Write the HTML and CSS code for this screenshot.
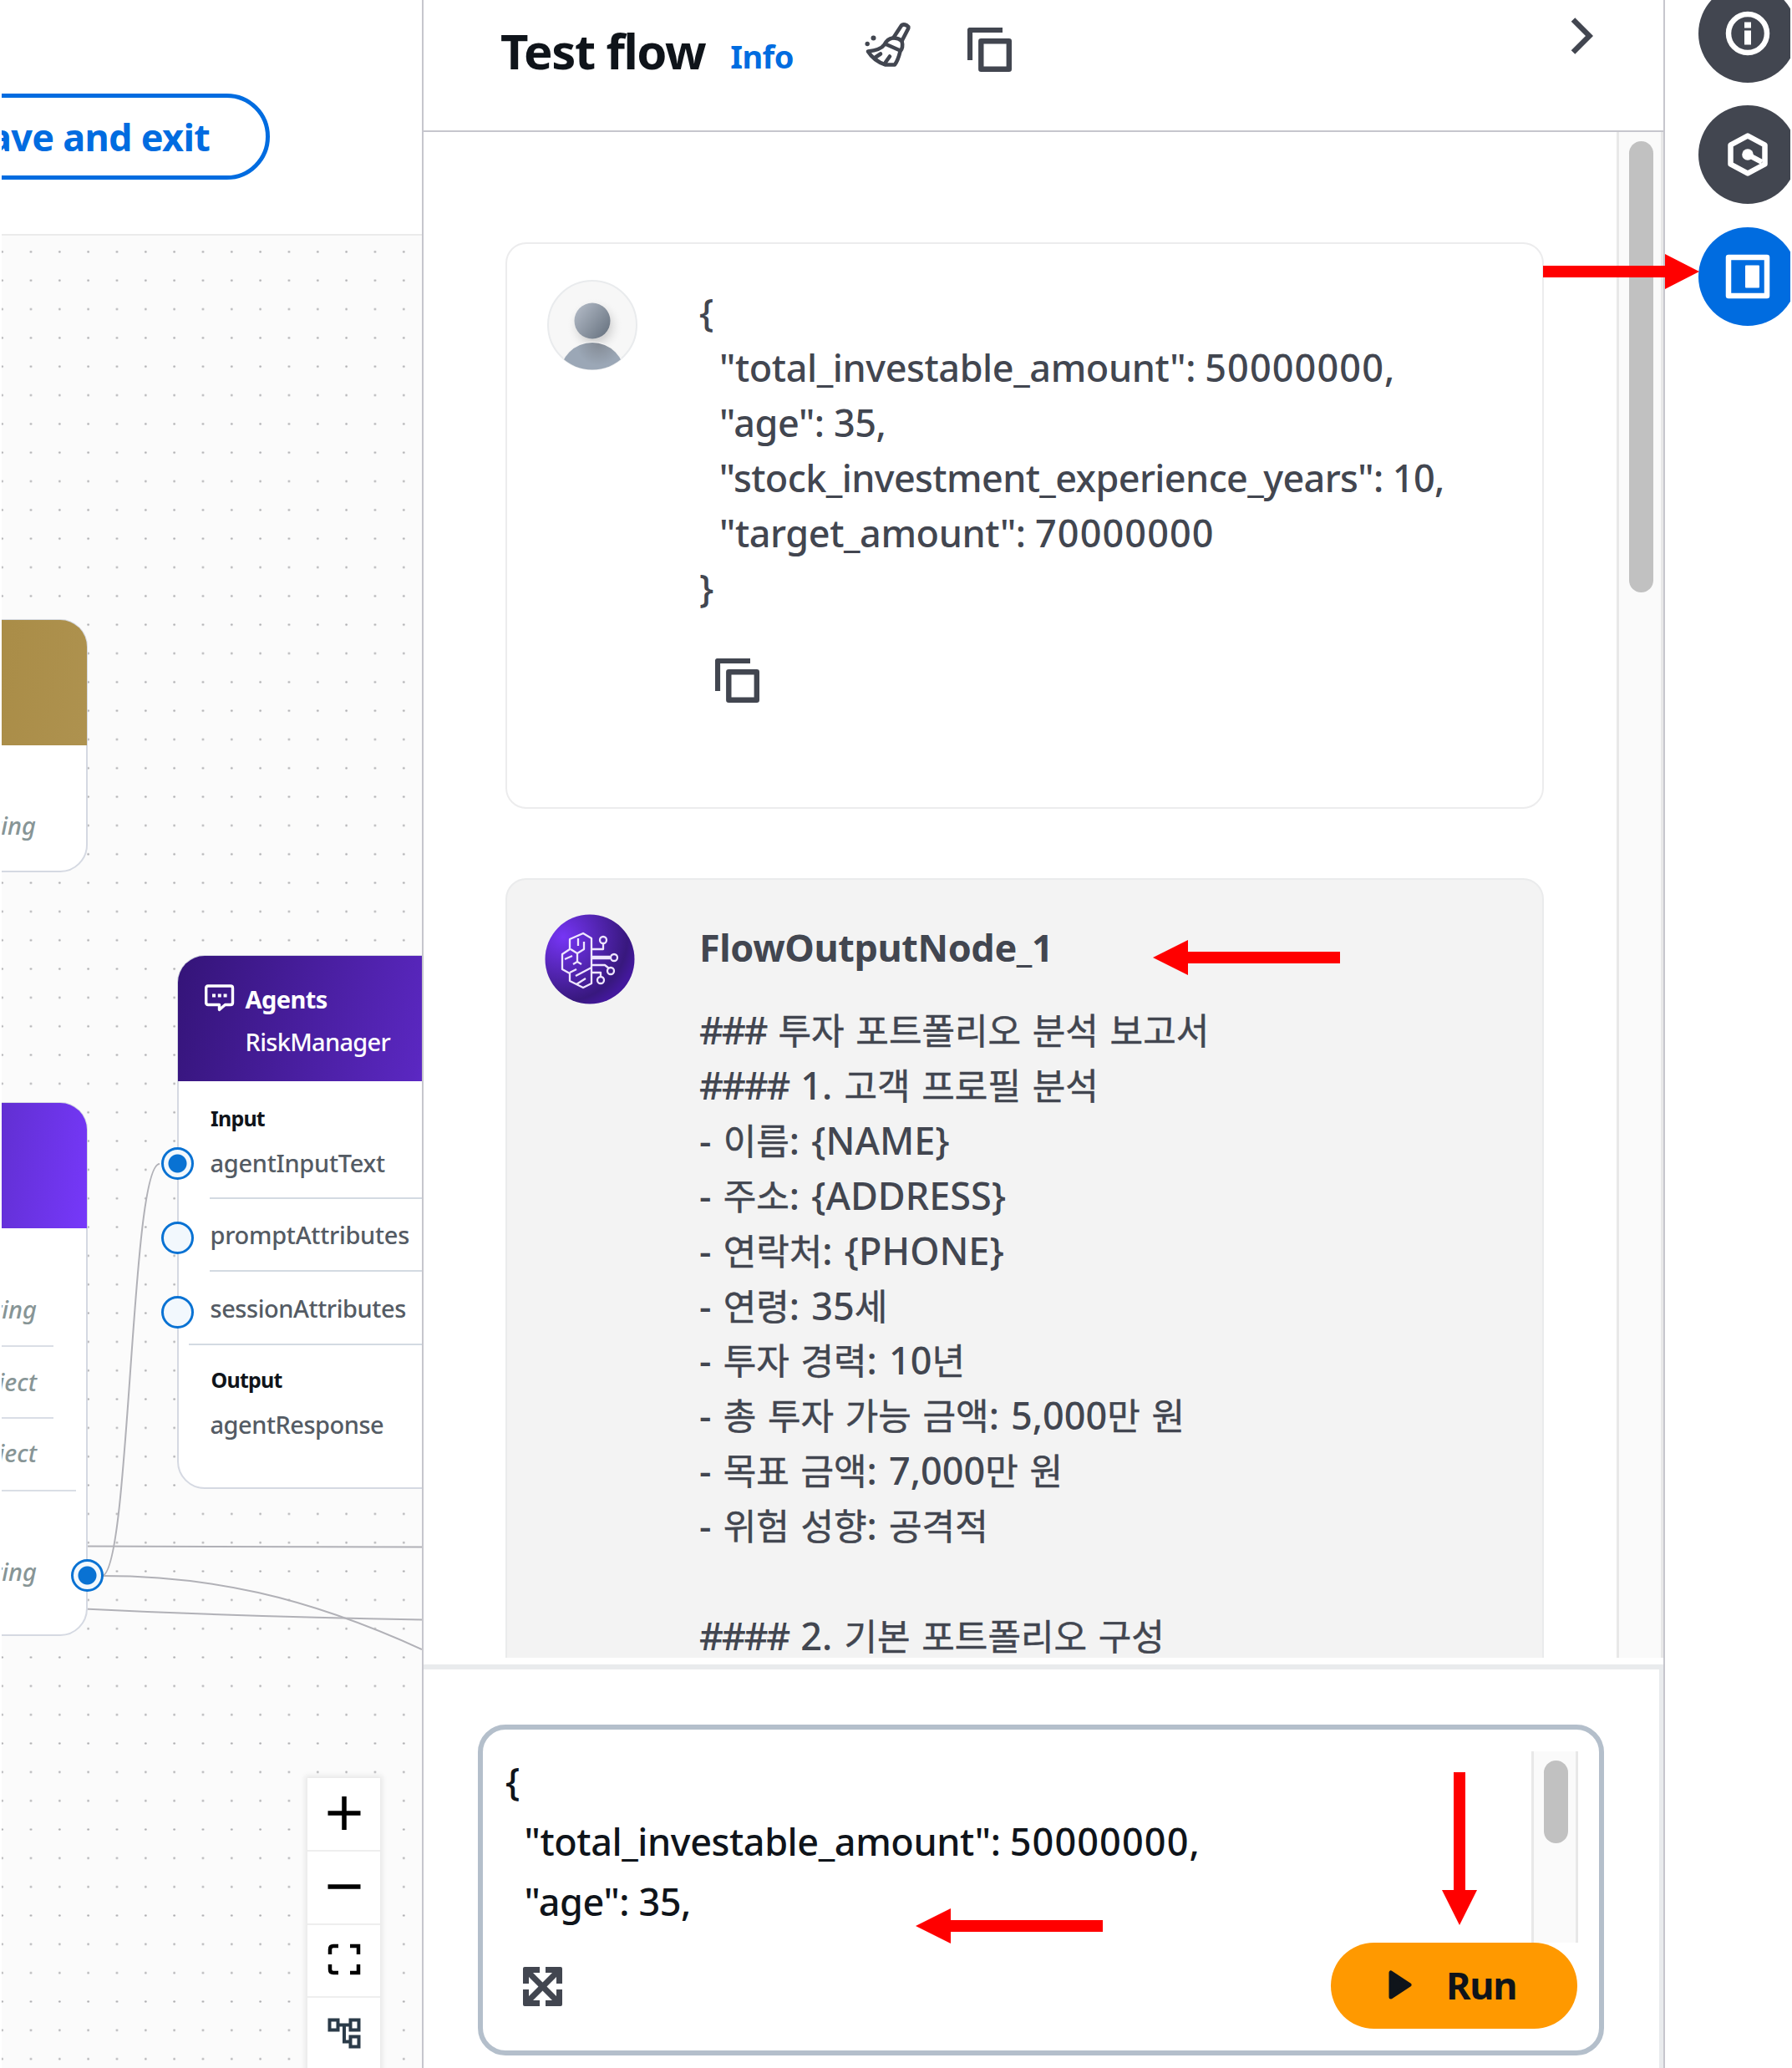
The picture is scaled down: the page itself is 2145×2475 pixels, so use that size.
FILE: index.html
```html
<!DOCTYPE html>
<html lang="ko">
<head>
<meta charset="utf-8">
<title>Test flow</title>
<link rel="stylesheet" href="styles.css">
</head>
<body>
<svg class="defs" width="0" height="0" aria-hidden="true">
  <defs>
    <symbol id="copy" viewBox="0 0 53 53">
      <path d="M3 39V3H42" fill="none" stroke="currentColor" stroke-width="6.200" stroke-linejoin="round"/>
      <rect x="16.300" y="16.300" width="33.500" height="33.500" fill="none" stroke="currentColor" stroke-width="6.400" stroke-linejoin="round"/>
    </symbol>
  </defs>
</svg>
<div class="app">
  <section class="workspace">
    <header class="topbar">
      <button class="save-exit">Save and exit</button>
    </header>
    <div class="canvas">
      <svg class="edges" width="505" height="2192" viewBox="0 282 505 2192">
        <defs>
          <pattern id="dots" x="-14.500" y="284.200" width="34.330" height="34.330" patternUnits="userSpaceOnUse">
            <circle cx="17.160" cy="17.160" r="1.250" fill="#a9a9ac"/>
          </pattern>
        </defs>
        <rect x="0" y="282" width="505" height="2192" fill="url(#dots)"/>
        <g fill="none" stroke="#b1b1b7" stroke-width="2">
          <path d="M122 1886C156 1886 156 1393 191 1393"/>
          <path d="M122 1886C250 1886 365 1910 505 1974"/>
          <path d="M90 1850.500L505 1851.500"/>
          <path d="M90 1925Q290 1935 505 1938.500"/>
        </g>
      </svg>

      <article class="node node-gold">
        <div class="node-head"></div>
        <div class="node-row type">String</div>
      </article>

      <article class="node node-purple">
        <div class="node-head"></div>
        <div class="node-row type">String</div>
        <div class="node-row type">Object</div>
        <div class="node-row type">Object</div>
        <div class="node-row type out">String</div>
        <i class="handle filled"></i>
      </article>

      <article class="node node-agent">
        <div class="node-head">
          <svg class="chat" width="36" height="36" viewBox="0 0 36 36" fill="none" stroke="#fff" stroke-width="3.400" stroke-linejoin="round">
            <path d="M4 2H31Q33.500 2 33.500 4.500V22Q33.500 24.500 31 24.500H24.500L17.500 30.500V24.500H4Q1.700 24.500 1.700 22V4.500Q1.700 2 4 2Z"/>
            <path d="M9 13.500H13M15.800 13.500H19.800M22.600 13.500H26.600" stroke-width="4"/>
          </svg>
          <div><b>Agents</b><span>RiskManager</span></div>
        </div>
        <h4>Input</h4>
        <div class="port p1">agentInputText</div>
        <div class="port p2">promptAttributes</div>
        <div class="port p3">sessionAttributes</div>
        <h4 class="sep">Output</h4>
        <div class="port p4">agentResponse</div>
        <i class="handle filled h1"></i><i class="handle h2"></i><i class="handle h3"></i>
      </article>

      <div class="controls">
        <div><svg width="40" height="40" viewBox="0 0 40 40"><path d="M20 0V40M.5 20H39.500" stroke="#000" stroke-width="5.500"/></svg></div>
        <div><svg width="40" height="40" viewBox="0 0 40 40"><path d="M.5 20H39.500" stroke="#000" stroke-width="5.500"/></svg></div>
        <div><svg width="40" height="40" viewBox="0 0 40 40" fill="none" stroke="#000" stroke-width="4.500"><path d="M3 14V8Q3 4 7 4H13M27 4H37V14M37 26V36H27M13 36H7Q3 36 3 32V26"/></svg></div>
        <div><svg width="40" height="40" viewBox="0 0 40 40" fill="none" stroke="#2b3b49" stroke-width="4"><rect x="2.500" y="4.500" width="10" height="12"/><rect x="27.500" y="4.500" width="10" height="12"/><rect x="27.500" y="24.500" width="10" height="12"/><path d="M13 10.500H27M20 10.500V30.500H27"/></svg></div>
      </div>
    </div>
  </section>

  <section class="panel">
    <header class="panel-head">
      <h2>Test flow</h2>
      <a class="info">Info</a>
      <svg class="broom" width="56" height="54" viewBox="0 0 56 54" fill="none" stroke="#424650" stroke-width="4.600" stroke-linejoin="round" stroke-linecap="round">
        <path d="M34.500 18L44 3.500Q45.500 2 48 2.500L50.500 3.500Q53 5 52 7.500L44.500 22"/>
        <path d="M33.500 18.500Q27 19.500 24 26Q19 33 4 34.500Q11 46 25 50.500H36Q40 45 42.500 34.500Q46.500 30 44.500 22Q40 18 33.500 18.500Z"/>
        <path d="M24.500 25.500L42.500 33.500M13 41.500L19 37.500M25 47.500L30 40.500"/>
        <circle cx="10.500" cy="18.500" r="3" fill="#424650" stroke="none"/>
        <circle cx="3.200" cy="25.500" r="2.700" fill="#424650" stroke="none"/>
      </svg>
      <svg class="icon head-copy" width="53" height="53"><use href="#copy"/></svg>
      <svg class="chevron" width="27" height="44" viewBox="0 0 27 44"><path d="M3 2.500L22.500 22L3 41.500" fill="none" stroke="#424650" stroke-width="6.500"/></svg>
    </header>

    <div class="scroll">
      <div class="messages">
        <article class="card user">
          <svg class="avatar" width="108" height="108" viewBox="0 0 108 108">
            <defs>
              <linearGradient id="head" x1="0" y1="0.200" x2="0.900" y2="0.900"><stop offset="0" stop-color="#b0b8c4"/><stop offset="1" stop-color="#6b7683"/></linearGradient>
              <radialGradient id="body" cx="0.600" cy="0" r="0.700"><stop offset="0" stop-color="#848b95"/><stop offset="0.500" stop-color="#9ba7b6"/></radialGradient>
              <radialGradient id="shade"><stop offset="0.500" stop-color="#d6d6d6"/><stop offset="1" stop-color="#f7f7f7" stop-opacity="0"/></radialGradient>
              <clipPath id="round"><circle cx="54" cy="54" r="53.500"/></clipPath>
            </defs>
            <circle cx="54" cy="54" r="53" fill="#f7f7f7" stroke="#e9ebed" stroke-width="2"/>
            <circle cx="57" cy="55" r="34" fill="url(#shade)"/>
            <g clip-path="url(#round)">
              <circle cx="54" cy="115" r="41" fill="#f4f4f4"/>
              <circle cx="54" cy="114" r="39" fill="url(#body)"/>
            </g>
            <circle cx="54" cy="49" r="21.500" fill="url(#head)"/>
          </svg>
          <div class="body">
<pre>{
<span class="l1">  "total_investable_amount": <span class="num">50000000</span>,</span>
<span class="l1">  "age": 35,</span>
<span class="l2">  "stock_investment_experience_years": 10,</span>
<span class="l1">  "target_amount": <span class="num">70000000</span></span>
}</pre>
            <svg class="icon" width="53" height="53"><use href="#copy"/></svg>
          </div>
        </article>

        <article class="card bot">
          <svg class="avatar" width="108" height="108" viewBox="0 0 108 108">
            <defs><radialGradient id="violet" cx="0.200" cy="0.250" r="0.850"><stop offset="0" stop-color="#7635f5"/><stop offset="0.850" stop-color="#38187e"/><stop offset="1" stop-color="#43189c"/></radialGradient></defs>
            <circle cx="54" cy="54" r="53.500" fill="url(#violet)"/>
            <g fill="none" stroke="#efe6ff" stroke-width="2.300" stroke-linejoin="round">
              <path d="M56 29L46 23L30 30V42L21 48V66L30 71V80L46 88L56 83Z"/>
              <path d="M40 29V38M47 33V42L39 47L31 42M39 47V58M34 60L39 57L44 60M24 54L33 50M30 70L38 66M37 74L56 64M38 84L49 77"/>
              <path d="M56 42H70V35M56 51H78M56 53H78M56 61H72L77 65M56 70H67V75"/>
              <circle cx="70" cy="31" r="4"/><circle cx="83" cy="52" r="4"/><circle cx="79" cy="68" r="4"/><circle cx="67" cy="79" r="4"/>
            </g>
          </svg>
          <div class="body">
            <h3>FlowOutputNode_1</h3>
<pre><span class="hash">###</span> <span class="ko">투자 포트폴리오 분석 보고서</span>
<span class="hash">####</span> 1. <span class="ko">고객 프로필 분석</span>
- <span class="ko">이름</span>: {NAME}
- <span class="ko">주소</span>: {ADDRESS}
- <span class="ko">연락처</span>: {PHONE}
- <span class="ko">연령</span>: 35<span class="ko">세</span>
- <span class="ko">투자 경력</span>: 10<span class="ko">년</span>
- <span class="ko">총 투자 가능 금액</span>: 5,000<span class="ko">만 원</span>
- <span class="ko">목표 금액</span>: 7,000<span class="ko">만 원</span>
- <span class="ko">위험 성향</span>: <span class="ko">공격적</span>

<span class="hash">####</span> 2. <span class="ko">기본 포트폴리오 구성</span></pre>
          </div>
        </article>
      </div>
      <div class="track"><div class="thumb"></div></div>
    </div>

    <footer class="composer">
      <div class="prompt">
        <div class="prompt-text">
<pre>{
<span class="l1">  "total_investable_amount": <span class="num">50000000</span>,</span>
<span class="l1">  "age": 35,</span></pre>
          <div class="track small"><div class="thumb"></div></div>
        </div>
        <div class="actions">
          <svg width="47" height="47" viewBox="0 0 47 47" fill="#424650">
            <path d="M2 0H20V7H12L23.500 18.500L35 7H27V0H45Q47 0 47 2V20H40V12L28.500 23.500L40 35V27H47V45Q47 47 45 47H27V40H35L23.500 28.500L12 40H20V47H2Q0 47 0 45V27H7V35L18.500 23.500L7 12V20H0V2Q0 0 2 0Z"/>
          </svg>
          <button class="run"><svg width="28" height="36" viewBox="0 0 28 36"><path d="M3 3V32L25 17.500Z" fill="#0f141a" stroke="#0f141a" stroke-width="5" stroke-linejoin="round"/></svg>Run</button>
        </div>
      </div>
    </footer>
  </section>

  <nav class="rail">
    <div class="tool"><svg width="54" height="54" viewBox="0 0 54 54"><circle cx="27" cy="27" r="23" fill="none" stroke="#fff" stroke-width="6.500"/><path d="M23 13.500H31V20.500H23ZM23 23.500H31V40.500H23Z" fill="#fff"/></svg></div>
    <div class="tool"><svg width="54" height="54" viewBox="0 0 54 54" fill="none" stroke="#fff" stroke-width="6.500" stroke-linejoin="round"><path d="M27 4.500L47.500 15.500V38.500L27 49.500L6.500 38.500V15.500Z"/><circle cx="27" cy="27" r="6.800" fill="#fff" stroke="none"/><path d="M27 27L44 36"/></svg></div>
    <div class="tool active"><svg width="54" height="54" viewBox="0 0 54 54"><rect x="4" y="4" width="46" height="46" fill="none" stroke="#fff" stroke-width="6.500" stroke-linejoin="round"/><rect x="24" y="13.500" width="17" height="27" rx="1" fill="#fff"/></svg></div>
  </nav>

  <svg class="arrows" width="2145" height="2475" viewBox="0 0 2145 2475" fill="#f00">
    <path d="M1847 318H1993V304L2034 325L1993 346V332H1847Z"/>
    <path d="M1604 1139H1422V1125L1380 1146L1422 1167V1153H1604Z"/>
    <path d="M1320 2298H1138V2284L1096 2305L1138 2326V2312H1320Z"/>
    <path d="M1740 2121V2262H1726L1747 2304L1768 2262H1754V2121Z"/>
  </svg>
</div>
</body>
</html>
```
FILE: styles.css
```css
* { box-sizing: border-box; }

body {
  margin: 0;
  background: #fff;
  color: #424650;
  font: 500 45px/66px "Noto Sans", "Noto Sans CJK KR", sans-serif;
}

h2, h3, h4, pre { margin: 0; }
pre { font: inherit; white-space: pre; }
button { font: inherit; cursor: pointer; }
.defs { position: absolute; }

.app {
  position: relative;
  display: grid;
  grid-template-columns: 503px 1488px 1fr;
  width: 2145px;
  height: 2475px;
  padding: 0 2px 2px;
  overflow: hidden;
}

/* Workspace */
.workspace { display: flex; flex-direction: column; min-width: 0; overflow: hidden; height: 2475px; }

.topbar {
  flex: 0 0 282px;
  display: flex;
  align-items: flex-start;
  justify-content: flex-end;
  padding: 112px 182px 0 0;
  border-bottom: 2px solid #ebebeb;
}

.save-exit {
  flex: none;
  height: 103px;
  padding: 0 67px;
  border: 5px solid #006ce0;
  border-radius: 52px;
  background: #fff;
  color: #006ce0;
  font-weight: 680;
  letter-spacing: -0.7px;
  line-height: 89px;
  white-space: nowrap;
}

.canvas { position: relative; flex: 1; background: #fbfbfb; overflow: hidden; }
.edges { position: absolute; left: -2px; top: 0; }

.node {
  position: absolute;
  background: #fff;
  border: 2px solid #d5d9e2;
  border-radius: 33px;
  font-size: 29px;
  line-height: 40px;
}

.node-head { height: 150px; margin: -1px -1px 0; border-radius: 32px 32px 0 0; }

.node-gold { left: -298px; top: 459px; width: 401px; height: 303px; }
.node-gold .node-head { background: linear-gradient(100deg, #a08035, #ae924f); }
.node-gold .node-row { padding-top: 76px; }

.node-purple { left: -298px; top: 1037px; width: 401px; height: 639px; }
.node-purple .node-head { background: linear-gradient(100deg, #4d27aa 40%, #7638fa); }
.node-purple .node-row { height: 86.5px; margin-right: 39px; padding-top: 22.5px; border-bottom: 2px solid #dadee6; }
.node-purple .node-row:nth-child(2) { height: 141.5px; padding-top: 77px; }
.node-purple .node-row:nth-child(4) { margin-right: 12px; padding-right: 47px; padding-top: 21px; }
.node-purple .node-row.out { padding-top: 76px; border: 0; }

.type { padding-right: 60px; color: #879596; font-style: italic; text-align: right; }
.node-purple .type { padding-right: 20px; }

.node-agent { left: 209.5px; top: 861px; width: 420px; height: 639px; color: #545b64; }
.node-agent .node-head {
  display: flex;
  gap: 13px;
  padding: 34px 0 0 32px;
  background: linear-gradient(105deg, #341478, #5a27c0 70%, #7638fa);
  color: #fff;
}
.node-head b, .node-head span { display: block; letter-spacing: -0.7px; line-height: 51px; }
.node-head b { margin-top: -8px; letter-spacing: -0.6px; }

.node-agent h4 {
  padding: 23px 0 0 38.5px;
  color: #0f141a;
  font-size: 25px;
  font-weight: 700;
  letter-spacing: -0.8px;
  line-height: 42px;
}
.node-agent .sep { margin-left: 12px; padding: 20px 0 0 27px; border-top: 2px solid #d3dae2; }
.port { margin-left: 37px; padding-left: 1px; letter-spacing: -0.3px; }
.p1 { height: 76px; padding-top: 12.5px; border-bottom: 2px solid #d3dae2; }
.p2 { height: 87px; padding-top: 23px; border-bottom: 2px solid #d3dae2; }
.p3 { height: 86px; padding-top: 24px; letter-spacing: -0.45px; }
.p4 { padding-top: 13px; letter-spacing: -0.5px; }

.handle {
  position: absolute;
  width: 39px;
  height: 39px;
  border: 3.5px solid #0972d3;
  border-radius: 50%;
  background: #f2f8fd;
}
.handle.filled { background: radial-gradient(circle, #0972d3 10.5px, #f2f8fd 11.5px); }
.node-purple .handle { right: -20.5px; top: 545px; }
.node-agent .handle { left: -20.8px; }
.h1 { top: 228px; }
.h2 { top: 317px; }
.h3 { top: 406px; }

.controls {
  position: absolute;
  left: 366px;
  top: 1846px;
  width: 87px;
  background: #fff;
  box-shadow: 0 0 6px 3px rgba(0, 0, 0, 0.08);
}
.controls div { display: grid; place-items: center; height: 87.800px; border-bottom: 2px solid #eee; }
.controls svg { display: block; margin-bottom: 2px; }

/* Test panel */
.panel {
  display: flex;
  flex-direction: column;
  height: 2475px;
  border: 2px solid #c6c6cd;
  border-width: 0 2px;
}

.panel-head {
  flex: 0 0 158px;
  display: flex;
  align-items: flex-start;
  padding-left: 92px;
  border-bottom: 2px solid #c6c6cd;
}
.panel-head h2 { margin-top: 20px; color: #0f141a; font-size: 58px; font-weight: 740; letter-spacing: -1.4px; line-height: 81px; }
.info { margin: 34px 0 0 30px; color: #006ce0; font-size: 38px; font-weight: 670; letter-spacing: -0.6px; }
.broom { margin: 27px 0 0 85px; }
.head-copy { margin: 33px 0 0 67px; }
.chevron { margin: 21px 84px 0 auto; }

.scroll { flex: 0 0 1826px; display: flex; overflow: hidden; }
.messages { flex: 1; display: flex; flex-direction: column; gap: 83px; padding: 132px 87px 0 98px; }

.card { display: flex; border: 2px solid #ececed; border-radius: 25px; }
.card.user { flex: 0 0 678px; }
.card.bot { flex: 0 0 1200px; background: #f3f3f3; border-color: #eaebec; }
.avatar { flex: none; display: block; margin: 43px 0 0 48px; }
.card.bot .avatar { margin: 41px 0 0 45px; }
.body { padding: 49px 0 0 74px; }
.card.bot .body { padding: 48px 0 0 77px; }
.body h3 { margin-bottom: 33px; font-size: 45px; font-weight: 720; letter-spacing: -0.4px; }
.user .icon { display: block; margin: 51px 0 0 19px; }

.l1 { letter-spacing: -0.42px; }
.l2 { letter-spacing: -0.62px; }
.user .l1, .user .l2 { padding-left: 1.5px; }
.num { letter-spacing: 1.1px; }
.bot pre { word-spacing: 2.5px; line-height: 65.9px; }
.hash { letter-spacing: -2.3px; }
.ko { font-size: 43px; font-weight: 400; line-height: 58px; -webkit-text-stroke: 0.5px #424650; }

.track {
  flex: 0 0 54px;
  padding: 11px 9px 0 12px;
  border: 3px solid #e8e8e8;
  border-width: 0 3px;
  background: #fafafa;
}
.thumb { width: 29px; height: 540px; border-radius: 15px; background: #c1c1c1; }

.composer {
  flex: 1;
  display: flex;
  margin-top: 8px;
  padding: 66px 66px 15px 65px;
  border: 5px solid #e9ebed;
  border-width: 6px 5px 0 0;
}
.prompt {
  flex: 1;
  height: 396px;
  padding: 26px 25px 0 27px;
  border: 6px solid #b4bfcb;
  border-radius: 33px;
}
.prompt-text { display: flex; justify-content: space-between; height: 229px; color: #0f141a; }
.prompt-text pre { line-height: 72px; }
.track.small .thumb { height: 99px; }
.actions { display: flex; justify-content: space-between; padding: 0 1px 0 21px; }
.actions > svg { margin-top: 29px; }

.run {
  display: flex;
  align-items: center;
  gap: 41px;
  width: 295px;
  height: 103px;
  padding: 0 0 2px 69px;
  border: 0;
  border-radius: 52px;
  background: #f90;
  color: #0f141a;
  font-weight: 700;
  letter-spacing: -1.3px;
}

/* Tool rail */
.rail {
  display: flex;
  flex-direction: column;
  gap: 27.5px;
  margin-top: -19.5px;
  padding-left: 39.5px;
  overflow: hidden;
}
.tool {
  flex: none;
  display: grid;
  place-items: center;
  width: 118px;
  height: 118px;
  border-radius: 50%;
  background: #424650;
}
.tool.active { background: #006ce0; }

.arrows { position: absolute; left: 0; top: 0; pointer-events: none; }
```
